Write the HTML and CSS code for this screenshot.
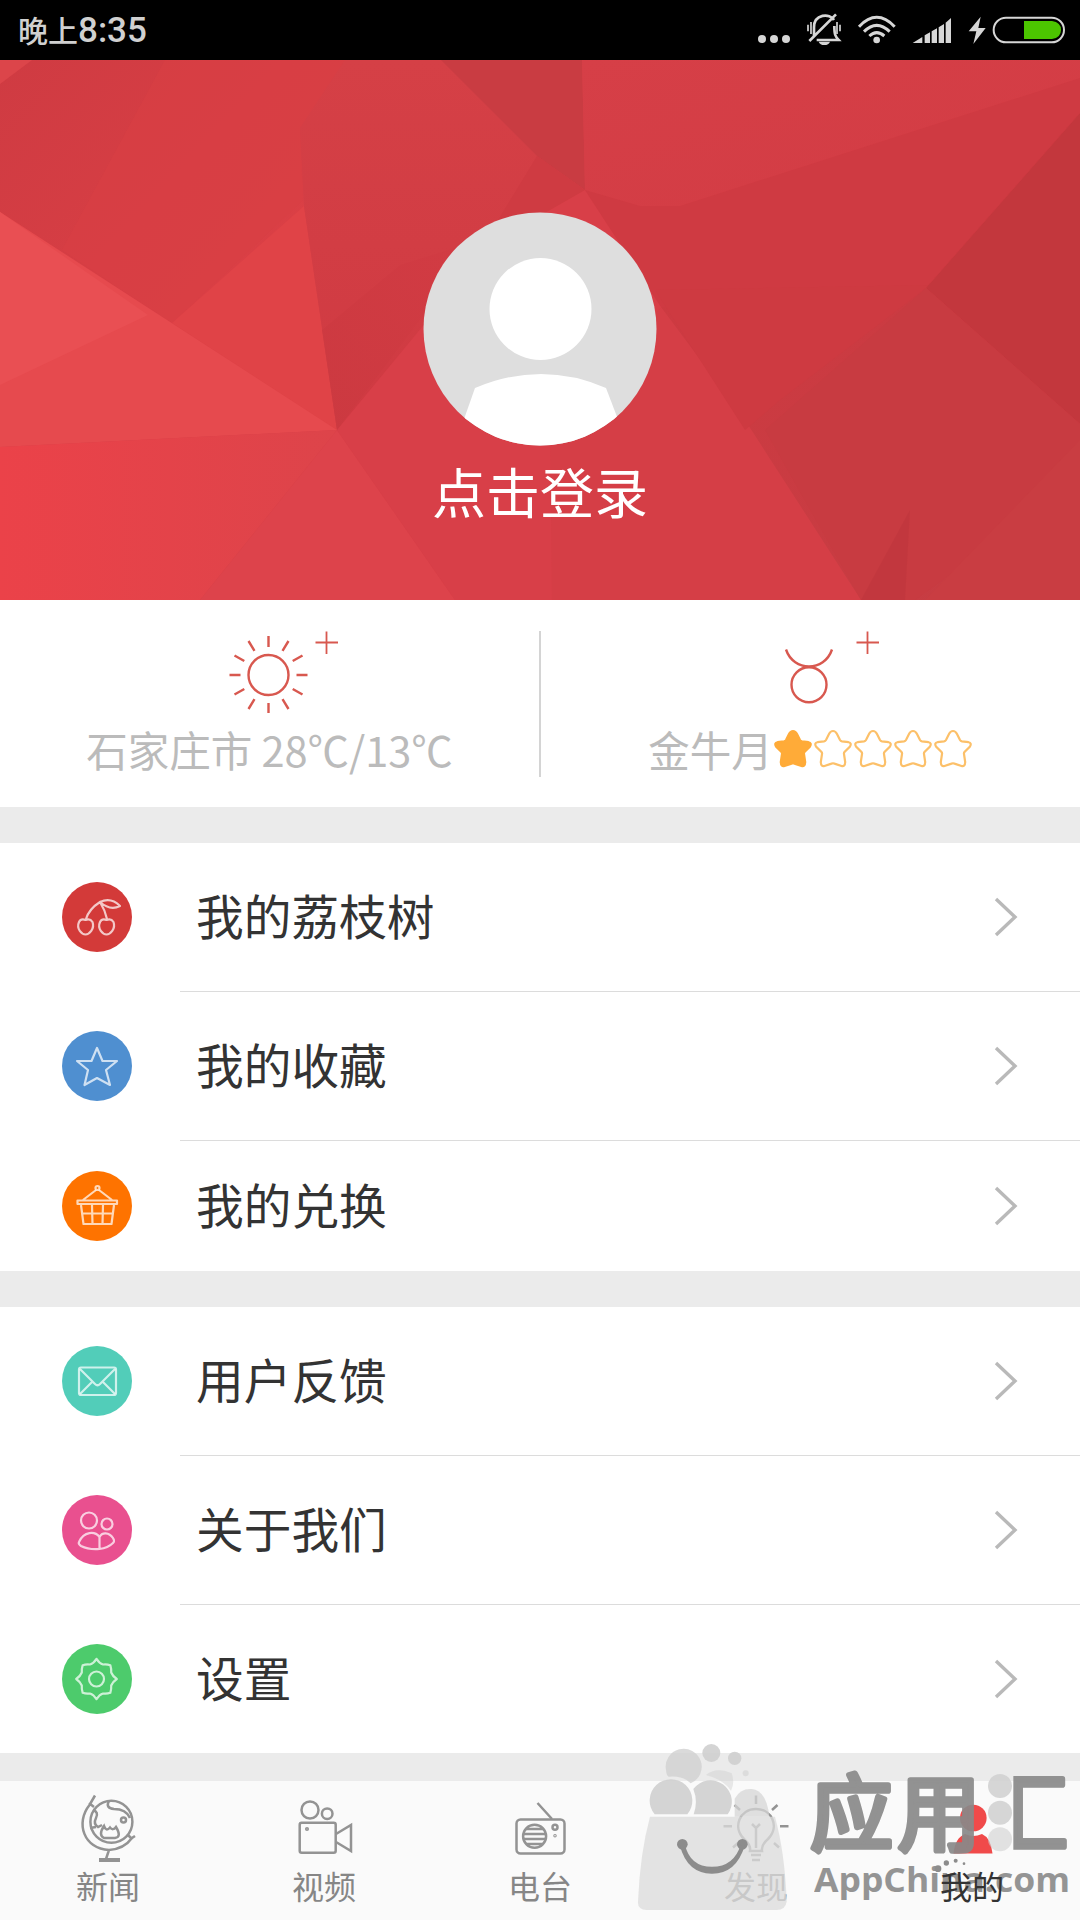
FILE: index.html
```html
<!DOCTYPE html>
<html lang="zh-CN">
<head>
<meta charset="utf-8">
<title>我的</title>
<link rel="stylesheet" href="styles.css">
</head>
<body>
<div class="screen">
  <header class="status">
    <div class="clock">晚上<span class="clock-time">8:35</span></div>
    <svg class="status-icons" viewBox="0 0 1020 180">
      <g fill="#d6d6d6">
        <circle cx="66" cy="117" r="12"/><circle cx="102" cy="117" r="12"/><circle cx="138" cy="117" r="12"/>
        <path d="M236 125h34q-4 10-17 10t-17-10z"/>
        <circle cx="410" cy="120" r="10"/>
        <path d="M518 129l29-18v18zM554 106l16-9v32h-16zM575 94l16-9v44h-16zM596 82l16-10v57h-16zM617 68l16-14v75h-16z"/>
        <path d="M722 50l-36 44h23l-9 38 37-48h-22z"/>
      </g>
      <g fill="none" stroke="#d6d6d6" stroke-width="8">
        <path d="M222 108V82c0-40 48-44 60-22M283 78c0 28 4 32 13 42h-66M288 43l-80 80" stroke-width="8"/>
        <path d="M213 66v36M204 74v20M291 66v36M300 74v20" stroke-width="5"/>
        <path d="M357 80q53-56 107 0M372 95q38-38 77 0M388 108q22-20 45 0" stroke-width="9"/>
        <rect x="761" y="53" width="211" height="74" rx="37" stroke-width="6"/>
      </g>
      <path d="M852 63h84q27 4 27 27t-27 27h-84z" fill="#4cc500"/>
    </svg>
  </header>

  <section class="hero">
    <svg class="facets" viewBox="0 60 1080 540" preserveAspectRatio="none">
      <defs>
        <linearGradient id="f1" x1="0" y1="0" x2="1" y2="1"><stop offset="0" stop-color="#cf3b42"/><stop offset="1" stop-color="#e04247"/></linearGradient>
        <linearGradient id="f2" x1="0" y1="0" x2="0" y2="1"><stop offset="0" stop-color="#d54046"/><stop offset="1" stop-color="#cf3a42"/></linearGradient>
        <linearGradient id="f3" x1="0" y1="0" x2="1" y2="1"><stop offset="0" stop-color="#d63f47"/><stop offset="1" stop-color="#d23c44"/></linearGradient>
        <linearGradient id="f4" x1="0" y1="0" x2="1" y2="0"><stop offset="0" stop-color="#eb4249"/><stop offset="1" stop-color="#dd444a"/></linearGradient>
        <linearGradient id="f5" x1="0" y1="0" x2="1" y2="1"><stop offset="0" stop-color="#cd3a41"/><stop offset="1" stop-color="#c63d43"/></linearGradient>
        <linearGradient id="f6" x1="1" y1="0" x2="0" y2="1"><stop offset="0" stop-color="#d23b43"/><stop offset="1" stop-color="#cb3940"/></linearGradient>
      </defs>
      <rect y="60" width="1080" height="540" fill="#d53e46"/>
      <path d="M0 60H345L300 128 304 206 337 430 0 212z" fill="url(#f1)"/>
      <path d="M0 60H32L0 84z" fill="#dc454a"/>
      <path d="M165 60H345L300 128 303 200 172 323 62 250z" fill="#d84045" opacity=".6"/>
      <path d="M304 206L337 430 172 323z" fill="#e04347"/>
      <path d="M0 212L337 430 0 447z" fill="#e64a4e"/>
      <path d="M0 212L148 315 0 385z" fill="#e94f53"/>
      <path d="M0 447L337 430 200 600H0z" fill="url(#f4)"/>
      <path d="M337 430L200 600H455z" fill="#dd434b"/>
      <path d="M345 60H441L537 156 470 290 337 430 304 206 300 128z" fill="url(#f2)"/>
      <path d="M337 430L560 160 585 190 661 307 550 430 552 600H455z" fill="#d83f48"/>
      <path d="M337 430L480 240 400 265 322 330z" fill="url(#f6)" opacity=".8"/>
      <path d="M441 60H582L585 190 537 156z" fill="#c93c42"/>
      <path d="M537 156L585 190 480 250z" fill="#cf3b42"/>
      <path d="M582 60H1080V78L680 206 640 206 585 190z" fill="url(#f3)"/>
      <path d="M585 190L640 206 680 206 1080 78V113L926 288 770 420 661 307z" fill="#cf3a42"/>
      <path d="M661 307L926 288 1080 424V600H861L745 420z" fill="url(#f5)"/>
      <path d="M655 290L930 285 780 400 745 430z" fill="#ce3a41"/>
      <path d="M1080 113L926 288 1080 424z" fill="#c3373d"/>
      <path d="M926 288L1080 424V480L915 600H861L765 430z" fill="#c83b41"/>
      <path d="M861 600L910 510 905 600z" fill="#c1373d" opacity=".8"/>
      <path d="M1080 440L925 600H1080z" fill="#c93d42"/>
    </svg>
    <svg class="avatar" viewBox="0 0 234 234">
      <clipPath id="disc"><circle cx="117" cy="117" r="116.500"/></clipPath>
      <g clip-path="url(#disc)">
        <rect width="234" height="234" fill="#dedede"/>
        <circle cx="117.500" cy="97" r="51" fill="#fff"/>
        <path d="M40 210L52 176Q85 162 118 162T183 176L196 210V234H40z" fill="#fff"/>
      </g>
    </svg>
    <div class="login">点击登录</div>
  </section>

  <section class="info">
    <div class="info-cell">
      <svg class="info-icon" viewBox="-68.500 -46 140 84" fill="none" stroke="#d8584f" stroke-width="2.400">
        <circle r="20"/>
        <path d="M0-28V-39M0 28V39M28 0H39M-28 0H-39M24.200-14L34-19.500M24.200 14L34 19.500M-24.200-14L-34-19.500M-24.200 14L-34 19.500M14-24.200L20-34M14 24.200L20 34M-14-24.200L-20-34M-14 24.200L-20 34"/>
        <path d="M47-32.500H69.500M58-43.500V-21" stroke-width="1.800"/>
      </svg>
      <div class="info-text">石家庄市 28℃/13℃</div>
    </div>
    <div class="divider"></div>
    <div class="info-cell">
      <svg class="info-icon" viewBox="-68.500 -46 140 84" fill="none" stroke="#d8584f" stroke-width="2.400">
        <circle cx="-.5" cy="9.700" r="17.500"/>
        <path d="M-23.500-25.500C-16-3 15-3 22.500-25.500"/>
        <path d="M47-32.500H69.500M58-43.500V-21" stroke-width="1.800"/>
      </svg>
      <div class="info-text">金牛月<svg class="stars" viewBox="0 0 200 40">
        <defs><path id="star" d="M20 2Q22.500 2 24 5L27 11Q27.600 12 29 12.300L35.500 13.200Q39 14 37 17.500L31.500 23Q30.700 24 31 25L32.200 33Q32 38 28.500 37L21.500 34.600Q20 34 18.500 34.600L11.500 37Q8 38 7.800 33L9 25Q9.300 24 8.500 23L3 17.500Q1 14 4.500 13.200L11 12.300Q12.400 12 13 11L16 5Q17.500 2 20 2z"/></defs>
        <g fill="none" stroke="#fcc069" stroke-width="2.200"><use href="#star" fill="#ffab38" stroke="#ffab38"/><use href="#star" x="40"/><use href="#star" x="80"/><use href="#star" x="120"/><use href="#star" x="160"/></g>
      </svg></div>
    </div>
  </section>

  <nav class="group">
    <a class="row">
      <svg class="badge red" viewBox="0 0 70 70"><path d="M23.500 38Q19 36 17 40C14 47 20 52.500 23.500 52.500S33 47 30.500 40Q28 36 23.500 38zM44.500 38Q40 36 38 40C35 47 41 52.500 44.500 52.500S54 47 51.500 40Q49 36 44.500 38zM24 37Q27 27 38 20Q43 28 45 37M38 20Q49 15 58 24Q48 29 38 20"/></svg>
      <span class="label">我的荔枝树</span>
      <svg class="chevron" viewBox="0 0 24 40"><path d="M2 2L21 20 2 38"/></svg>
    </a>
    <a class="row">
      <svg class="badge blue" viewBox="0 0 70 70"><path d="M35 17L40.500 30H55L44 39 48 54 35 47 22.500 54 26 39 15 30H29.500z"/></svg>
      <span class="label">我的收藏</span>
      <svg class="chevron" viewBox="0 0 24 40"><path d="M2 2L21 20 2 38"/></svg>
    </a>
    <a class="row short">
      <svg class="badge orange" viewBox="0 0 70 70"><path d="M15.500 29.500h39.500v3.500H15.500zM19 34l2.500 19h28l2.500-19M20 42.500h31M30 34l.5 19M41 34l-.5 19M21 29L34 19M50 29L37 19"/><circle cx="35.500" cy="17" r="2"/></svg>
      <span class="label">我的兑换</span>
      <svg class="chevron" viewBox="0 0 24 40"><path d="M2 2L21 20 2 38"/></svg>
    </a>
  </nav>

  <nav class="group">
    <a class="row">
      <svg class="badge teal" viewBox="0 0 70 70"><rect x="17" y="21.500" width="37" height="27.500" rx="2"/><path d="M18 23L33 38Q35.500 40.500 38 38L53 23M18 48L30 36M53 48L41 36"/></svg>
      <span class="label">用户反馈</span>
      <svg class="chevron" viewBox="0 0 24 40"><path d="M2 2L21 20 2 38"/></svg>
    </a>
    <a class="row">
      <svg class="badge pink" viewBox="0 0 70 70"><circle cx="27" cy="25.500" r="8"/><circle cx="45" cy="29" r="5.500"/><path d="M37.500 54V42C33 36 22 36 17 47Q16 49 19 51Q27 55 37.500 54Q46 53 51 48Q53 46 51 43C47 37 40 37 37.500 42"/></svg>
      <span class="label">关于我们</span>
      <svg class="chevron" viewBox="0 0 24 40"><path d="M2 2L21 20 2 38"/></svg>
    </a>
    <a class="row last">
      <svg class="badge green" viewBox="0 0 70 70"><circle cx="34.500" cy="35" r="7.500"/><path d="M34.500 14.800Q37.500 19.500 41 20.500Q45 20 48.300 21.200Q49.500 25 49.200 28.500Q50.500 32 54.800 35Q50.500 38 49.200 41.500Q49.500 45 48.300 48.800Q45 50 41 49.500Q37.500 50.500 34.500 55.200Q31.500 50.500 28 49.500Q24 50 20.700 48.800Q19.500 45 19.800 41.500Q18.500 38 14.200 35Q18.500 32 19.800 28.500Q19.500 25 20.700 21.200Q24 20 28 20.500Q31.500 19.500 34.500 14.800z"/></svg>
      <span class="label">设置</span>
      <svg class="chevron" viewBox="0 0 24 40"><path d="M2 2L21 20 2 38"/></svg>
    </a>
  </nav>

  <footer class="tabs">
    <a class="tab">
      <svg class="tab-icon" viewBox="0 0 72 72">
        <circle cx="39.400" cy="28.700" r="21"/>
        <path d="M23 2.500L17.500 12C3 30 12 56 37 57Q52 56 60 45L63 43M17 10l5 4M56 42l4 4M37 57l-3 9"/>
        <path d="M27 67h21" stroke-width="4"/>
        <path d="M21 17Q27 19 24 25T26 34L30 32M18 35l6-1M37 8Q33 15 42 16 54 16 58 25M32 33Q34 39 38 34.500Q41 38 44 34Q50 44 43 45H32Q26 42 32 33z"/>
        <circle cx="51.500" cy="27" r="2.500"/>
      </svg>
      <span>新闻</span>
    </a>
    <a class="tab">
      <svg class="tab-icon" viewBox="0 0 72 72">
        <circle cx="22" cy="17" r="8.500"/><circle cx="39.200" cy="20.700" r="5.300"/>
        <rect x="11.700" y="29.700" width="36" height="30" rx="2"/>
        <path d="M48 41L63 32V58L48 49"/><circle cx="19" cy="36" r=".8"/>
      </svg>
      <span>视频</span>
    </a>
    <a class="tab">
      <svg class="tab-icon" viewBox="0 0 72 72">
        <rect x="12.500" y="26.500" width="48" height="34" rx="4"/>
        <circle cx="30.600" cy="43.300" r="11.500"/>
        <path d="M33.500 10L48 26M22 36h17M19 41h23M19 46h23M22 51h17"/>
        <circle cx="51" cy="34.300" r="2.500"/><circle cx="51" cy="42.700" r=".5"/>
      </svg>
      <span>电台</span>
    </a>
    <a class="tab">
      <svg class="tab-icon" viewBox="0 0 72 72">
        <path d="M30 58Q31 52 24 46C12 34 20 16 36 16S60 34 48 46Q41 52 42 58zM31 62h10M32 67h8M32 31l4 4 4-4M36 35v20"/>
        <path d="M36 2.500V11M52 17l5.500-5M60 33.300h8.500M54 50l5 4.500M20 17l-5.500-5M12 33.300H3.500M18 50l-5 4.500"/>
      </svg>
      <span>发现</span>
    </a>
    <a class="tab active">
      <svg class="tab-icon" viewBox="0 0 72 72">
        <circle cx="37.300" cy="25" r="13.300"/>
        <path d="M17.500 60.500Q19 45 29 41Q37 45 46 41Q55 45 56.500 60.500z"/>
      </svg>
      <span>我的</span>
    </a>
  </footer>

  <svg class="watermark" viewBox="0 0 1440 600">
    <g fill="#d0d0d0" opacity=".9">
      <circle cx="334" cy="99" r="27"/><circle cx="404" cy="115" r="20"/><circle cx="437" cy="160" r="9" opacity=".6"/>
      <path d="M272 190A54 54 0 1 0 198 150Q200 168 206 170Q250 166 272 190z" opacity=".85"/>
      <path d="M318 165Q350 140 395 160Q405 190 393 212Q370 178 318 165z" opacity=".5"/>
      <path d="M164 283A64 64 0 1 1 262 283z"/><path d="M281 283Q295 245 280 207A62 62 0 1 1 383 283z"/>
    </g>
    <path d="M404 290V236Q420 205 455 207Q500 212 508 290z" fill="#d6d6d6" opacity=".75"/>
    <path d="M150 290H525Q555 400 560 545Q556 570 530 570H140Q112 568 114 545Q120 400 150 290z" fill="#dcdcdc" opacity=".77"/>
    <g fill="#8c8c8c"><circle cx="247" cy="373" r="16"/><circle cx="427" cy="373" r="16"/><path d="M240 378Q262 460 335 461T434 378L422 374Q402 440 336 440T255 374z"/></g>
    <g fill="#d0d0d0" opacity=".85"><circle cx="1200" cy="198" r="36"/><circle cx="1200" cy="278" r="36"/><circle cx="1200" cy="358" r="36" opacity=".7"/></g>
    <clipPath id="brand-clip"><path d="M600 120H1150V430H600zM1240 120H1440V430H1240z"/></clipPath>
    <g class="brand" clip-path="url(#brand-clip)"><text x="631 893 1156" y="372">应用汇</text></g>
    <g class="brand-url"><text x="642" y="517" textLength="768" lengthAdjust="spacingAndGlyphs">AppChina.com</text></g>
    <g fill="#8c8c8c"><circle cx="1014" cy="446" r="10"/><circle cx="1039" cy="429" r="8"/><circle cx="1067" cy="422" r="6"/><circle cx="1092" cy="431" r="4"/></g>
  </svg>
</div>
</body>
</html>
```
FILE: styles.css
```css
* { box-sizing: border-box; }
body {
  margin: 0;
  background: #ebebeb;
  font-family: "Noto Sans CJK SC", "Noto Sans", sans-serif;
}
.screen {
  position: relative;
  width: 1080px;
  height: 1920px;
  overflow: hidden;
  display: flex;
  flex-direction: column;
}
.status {
  height: 60px;
  flex: none;
  background: #000;
  display: flex;
  justify-content: space-between;
  align-items: center;
  padding-left: 18px;
}
.clock {
  color: #d0d0d0;
  height: 60px;
  font: 500 30px/58px "Noto Sans CJK SC", sans-serif;
}
.clock-time { font: 500 35px/50px Roboto, sans-serif; }
.status-icons { width: 340px; height: 60px; }

.hero {
  position: relative;
  height: 540px;
  flex: none;
  display: flex;
  flex-direction: column;
  align-items: center;
  padding-top: 152px;
}
.facets { position: absolute; left: 0; top: 0; width: 1080px; height: 540px; }
.avatar { position: relative; width: 234px; height: 234px; }
.login {
  position: relative;
  margin-top: 5px;
  color: #fff;
  font: 54px/80px "Noto Sans CJK SC", sans-serif;
}

.info {
  height: 207px;
  flex: none;
  background: #fff;
  display: flex;
  align-items: flex-start;
}
.info-cell {
  flex: 1;
  display: flex;
  flex-direction: column;
  align-items: center;
  padding-top: 29px;
}
.info-icon { width: 140px; height: 84px; }
.info-text {
  display: flex;
  align-items: center;
  height: 60px;
  margin-top: 6px;
  font-size: 41.500px;
  line-height: 60px;
  color: #bbb;
  white-space: pre;
}
.stars { width: 200px; height: 40px; }
.divider { width: 2px; height: 146px; margin-top: 31px; background: #d4d4d4; }

.group { margin-top: 36px; background: #fff; flex: none; }
.row {
  position: relative;
  height: 149px;
  display: flex;
  align-items: center;
  padding: 0 62px 2px;
}
.row.short { height: 130px; padding-bottom: 1px; }
.row.last { height: 148px; padding-bottom: 1px; }
.row:not(:last-child)::after {
  content: "";
  position: absolute;
  left: 180px;
  right: 0;
  bottom: 0;
  height: 1px;
  background: #dcdcdc;
}
.badge {
  width: 70px;
  height: 70px;
  border-radius: 50%;
  fill: none;
  stroke: rgba(255, 255, 255, .72);
  stroke-width: 2.200;
  stroke-linejoin: round;
}
.red { background: #d33a39; }
.blue { background: #4f8fd0; }
.orange { background: #fe7300; }
.teal { background: #52cdb9; }
.pink { background: #e9508f; }
.green { background: #4dcb6c; }
.label {
  flex: 1;
  margin-left: 64px;
  padding-bottom: 4px;
  color: #333;
  font: 47.700px/72px "Noto Sans CJK SC", sans-serif;
}
.chevron { width: 24px; height: 40px; fill: none; stroke: #b9b9b9; stroke-width: 3.400; }

.tabs {
  margin-top: 28px;
  flex: 1;
  display: flex;
  background: #fafafa;
}
.tab {
  flex: 1;
  display: flex;
  flex-direction: column;
  align-items: center;
  padding-top: 12px;
  color: #868686;
  font: 32px/40px "Noto Sans CJK SC", sans-serif;
}
.tab-icon { width: 72px; height: 72px; fill: none; stroke: #939393; stroke-width: 2.500; }
.tab.active { color: #333; }
.tab.active span { position: relative; z-index: 2; }
.tab.active .tab-icon { fill: #f04a4a; stroke: none; }

.watermark {
  position: absolute;
  left: 600px;
  top: 1720px;
  width: 480px;
  height: 200px;
  z-index: 1;
}
.brand { opacity: .92; }
.brand text {
  font: 400 248px "Noto Sans CJK SC", sans-serif;
  fill: #898989;
  stroke: #898989;
  stroke-width: 17;
  stroke-linejoin: round;
}
.brand-url { opacity: .9; }
.brand-url text { font: 700 104px "Open Sans", sans-serif; fill: #8a8a8a; }
```
